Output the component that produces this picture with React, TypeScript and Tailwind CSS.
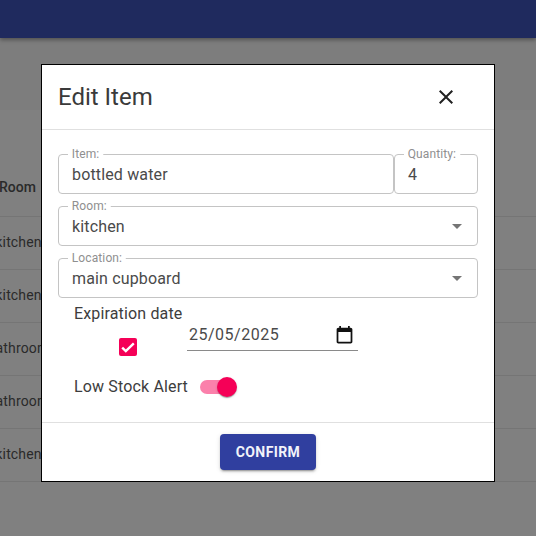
import React from "react";

function Field({ label, value, select, className }: { label: string; value: string; select?: boolean; className?: string }) {
  return (
    <div className={"relative flex h-10 items-center justify-between rounded border border-[#c4c4c4] pl-[13px] pr-[13px] pt-[2px] " + (className ?? "")}>
      <span className="absolute left-[9px] top-[-8px] origin-top-left scale-75 whitespace-nowrap bg-white px-[5px] text-[16px] leading-[19px] tracking-[0.15px] text-[#8f8f8f]">{label}</span>
      <span className="text-[16px] leading-[24px] tracking-[0.15px] text-[#4a4a4a]">{value}</span>
      {select && (
        <svg width="24" height="24" viewBox="0 0 24 24" className="mr-[-5px] mt-[-2px]" fill="#757575"><path d="M7 10l5 5 5-5z" /></svg>
      )}
    </div>
  );
}

const rows = ["kitchen", "kitchen", "bathroom", "bathroom", "kitchen"];

export default function App() {
  return (
    <div className="relative h-[536px] w-[536px] overflow-hidden bg-[#7d7d7d] font-['Roboto',sans-serif]">
      <div className="h-[38px] bg-[#1f2a5e] shadow-[0_2px_4px_rgba(0,0,0,0.35)]" />
      <div className="mt-[72px] bg-[#808080]">
        <div className="h-[107px] border-b border-[#757575] pt-[67px]">
          <div className="ml-[-1px] text-[14px] font-medium leading-[20px] text-[#2a2a2a]">Room</div>
        </div>
        {rows.map((r, i) => (
          <div key={i} className="flex h-[53px] items-center border-b border-[#757575] pb-[2px]">
            <div className="flex w-[37px] justify-center">
              <span className="text-[14px] leading-[20px] tracking-[0.15px] text-[#2a2a2a] whitespace-nowrap">{r}</span>
            </div>
          </div>
        ))}
        <div className="h-[55px]" />
      </div>
      <div className="absolute left-[41px] top-[64px] w-[454px] border border-black bg-white">
        <div className="flex h-[65px] items-center justify-between border-b border-[#e0e0e0] pl-4 pr-[36px]">
          <h2 className="text-[24px] font-normal leading-[32px] text-[#3a3a3a]">Edit Item</h2>
          <svg width="24" height="24" viewBox="0 0 24 24" fill="#212121"><path d="M19 6.41 17.59 5 12 10.59 6.41 5 5 6.41 10.59 12 5 17.59 6.41 19 12 13.41 17.59 19 19 17.59 13.41 12z" /></svg>
        </div>
        <div className="flex flex-col gap-3 pl-4 pr-4 pt-6">
          <div className="flex">
            <Field label="Item:" value="bottled water" className="flex-1" />
            <Field label="Quantity:" value="4" className="w-[84px]" />
          </div>
          <Field label="Room:" value="kitchen" select />
          <Field label="Location:" value="main cupboard" select />
        </div>
        <div className="flex items-start pl-8 pt-[6px]">
          <div className="flex w-[113px] shrink-0 flex-col">
            <span className="whitespace-nowrap text-[16px] leading-[20px] tracking-[0.15px] text-[#3d3d3d]">Expiration date</span>
            <div className="ml-[45px] mt-[14px] flex h-[18px] w-[18px] items-center justify-center rounded-[2px] bg-[#f50057]">
              <svg width="18" height="18" viewBox="0 0 18 18" fill="none" stroke="white" strokeWidth="2.4"><path d="M3.2 9.6l3.6 3.4 8-7.6" /></svg>
            </div>
          </div>
          <div className="mt-[21px] flex h-[26px] w-[171px] items-start justify-between border-b border-[#8a8a8a] pl-[2px] pr-[3.5px]">
            <span className="text-[16px] leading-[20px] tracking-[0.5px] text-[#4a4a4a]">25/05/2025</span>
            <svg width="21" height="21" viewBox="0 0 24 24" fill="#111111"><path d="M19 3h-1V1h-2v2H8V1H6v2H5c-1.1 0-2 .9-2 2v14c0 1.1.9 2 2 2h14c1.1 0 2-.9 2-2V5c0-1.1-.9-2-2-2zm0 16H5V8h14v11z" /></svg>
          </div>
        </div>
        <div className="flex items-center pl-8 pt-[21px]">
          <span className="whitespace-nowrap text-[16px] leading-[20px] tracking-[0.15px] text-[#3d3d3d]">Low Stock Alert</span>
          <div className="relative ml-[12px] h-[14px] w-[34px] rounded-full bg-[#fb80ab]">
            <div className="absolute right-[-3px] top-[-3px] h-5 w-5 rounded-full bg-[#f50057] shadow-[0_2px_1px_-1px_rgba(0,0,0,0.2),0_1px_1px_0_rgba(0,0,0,0.14),0_1px_3px_0_rgba(0,0,0,0.12)]" />
          </div>
        </div>
        <div className="mt-[25px] flex h-[59px] justify-center border-t border-[#e0e0e0] pt-[11px]">
          <button className="h-9 w-24 rounded bg-[#303f9f] text-[14px] font-bold leading-[36px] tracking-[0.4px] text-[#f2f3fa] shadow-[0_3px_1px_-2px_rgba(0,0,0,0.2),0_2px_2px_0_rgba(0,0,0,0.14),0_1px_5px_0_rgba(0,0,0,0.12)]">CONFIRM</button>
        </div>
      </div>
    </div>
  );
}
